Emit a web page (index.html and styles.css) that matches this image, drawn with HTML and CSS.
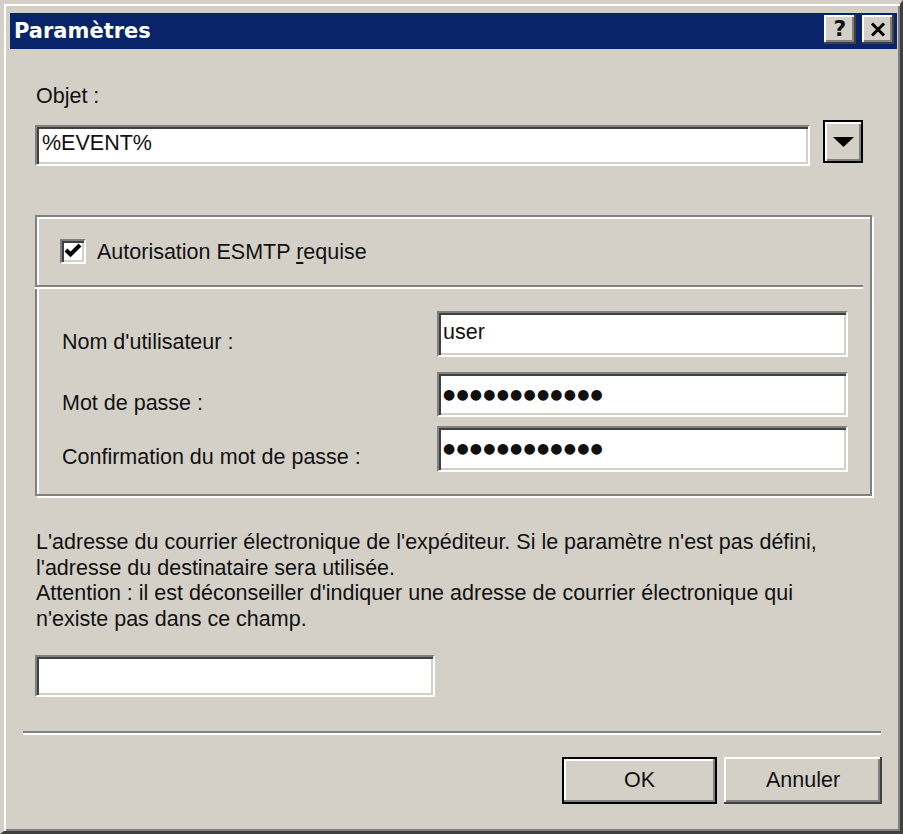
FILE: index.html
```html
<!DOCTYPE html>
<html lang="fr">
<head>
<meta charset="utf-8">
<title>Paramètres</title>
<link rel="stylesheet" href="styles.css">
</head>
<body>
<div class="window">
  <div class="titlebar">
    <span class="title">Paramètres</span>
    <div class="caption-buttons">
      <span class="cap-btn help">?</span>
      <span class="cap-btn close"><svg width="16" height="15" viewBox="0 0 16 15"><path d="M2 1.5 L14 13.5 M14 1.5 L2 13.5" stroke="#000" stroke-width="3" fill="none"/></svg></span>
    </div>
  </div>
  <div class="content">
    <div class="label-objet">Objet :</div>
    <div class="objet-row">
      <div class="field field-objet">%EVENT%</div>
      <div class="combo-btn"><svg width="21" height="10" viewBox="0 0 21 10"><path d="M0 0 H21 L10.5 10 Z" fill="#000"/></svg></div>
    </div>
    <div class="group">
      <div class="group-head">
        <span class="checkbox"><svg width="22" height="21" viewBox="0 0 22 21"><polyline points="4,9 8.5,13.5 18,4" fill="none" stroke="#000" stroke-width="4" stroke-linejoin="miter" stroke-linecap="butt"/></svg></span>
        <span class="check-label">Autorisation ESMTP <u>r</u>equise</span>
      </div>
      <div class="group-sep"></div>
      <div class="form">
        <div class="form-row">
          <span class="form-label">Nom d'utilisateur :</span>
          <div class="field field-form">user</div>
        </div>
        <div class="form-row row-pass">
          <span class="form-label">Mot de passe :</span>
          <div class="field field-form field-short dots">●●●●●●●●●●●●</div>
        </div>
        <div class="form-row row-confirm">
          <span class="form-label">Confirmation du mot de passe :</span>
          <div class="field field-form dots">●●●●●●●●●●●●</div>
        </div>
      </div>
    </div>
    <p class="note">L'adresse du courrier électronique de l'expéditeur. Si le paramètre n'est pas défini, l'adresse du destinataire sera utilisée.<br>Attention : il est déconseiller d'indiquer une adresse de courrier électronique qui n'existe pas dans ce champ.</p>
    <div class="field field-email"></div>
    <div class="separator"></div>
    <div class="buttons">
      <span class="btn btn-default">OK</span>
      <span class="btn">Annuler</span>
    </div>
  </div>
</div>
</body>
</html>
```
FILE: styles.css
```css
* { box-sizing: border-box; }
html, body { margin: 0; padding: 0; }
body { background: #d4d0c8; width: 903px; height: 834px; overflow: hidden; }

.window {
  width: 903px;
  height: 834px;
  background: #d4d0c8;
  border-style: solid;
  border-width: 4px 3px 3px 4px;
  border-color: #d4d0c8 #404040 #404040 #d4d0c8;
  box-shadow: inset 2px 2px 0 #fff, inset -2px -2px 0 #808080;
  padding: 9px 3px 0 6px;
  font-family: "Liberation Sans", Arial, sans-serif;
  font-size: 21.5px;
  color: #111;
  display: flex;
  flex-direction: column;
}

.titlebar {
  height: 36px;
  background: #0a246a;
  display: flex;
  justify-content: space-between;
  align-items: flex-start;
  flex: none;
}
.title {
  font-family: "DejaVu Sans", sans-serif;
  font-weight: bold;
  font-size: 21px;
  color: #fff;
  line-height: 36px;
  padding-left: 4px;
}
.caption-buttons { display: flex; gap: 6px; padding: 2px 3px 0 0; }
.cap-btn {
  width: 32px;
  height: 29px;
  background: #d4d0c8;
  box-shadow: inset -2px -2px 0 #404040, inset 2px 2px 0 #fff, inset -4px -4px 0 #808080;
  display: flex;
  align-items: center;
  justify-content: center;
}
.help {
  font-family: "DejaVu Sans", sans-serif;
  font-weight: bold;
  font-size: 22px;
  line-height: 1;
  padding-bottom: 1px;
}

.content { flex: 1; padding: 0 15px 0 13px; }

.field {
  background: #fff;
  border: 2px solid;
  border-color: #808080 #fff #fff #808080;
  box-shadow: inset 2px 2px 0 #404040, inset -2px -2px 0 #d4d0c8;
  line-height: 26px;
  white-space: nowrap;
}

.label-objet { margin: 34px 0 0 13px; line-height: 26px; }
.objet-row { display: flex; align-items: flex-start; gap: 13px; margin: 11px 0 0 12px; }
.field-objet { width: 775px; height: 41px; margin-top: 5px; padding: 3px 5px 0; }
.combo-btn {
  width: 40px;
  height: 43px;
  border: 2px solid #000;
  background: #d4d0c8;
  box-shadow: inset 2px 2px 0 #fff, inset -2px -2px 0 #808080;
  display: flex;
  align-items: center;
  justify-content: center;
}

.group {
  margin: 49px 10px 0 12px;
  height: 281px;
  border: 2px solid #808080;
  box-shadow: inset 2px 2px 0 #fff, 2px 2px 0 #fff;
}
.group-head { height: 68px; display: flex; align-items: center; padding-left: 23px; }
.checkbox {
  width: 26px;
  height: 25px;
  background: #fff;
  border: 2px solid;
  border-color: #808080 #fff #fff #808080;
  box-shadow: inset 2px 2px 0 #404040, inset -2px -2px 0 #d4d0c8;
  margin-right: 11px;
  display: flex;
}
.check-label { line-height: 26px; padding-top: 2px; }
.check-label u { text-underline-offset: 3px; }
.group-sep {
  height: 4px;
  border-top: 2px solid #808080;
  border-bottom: 2px solid #fff;
  margin: 0 7px 0 -2px;
}
.form { padding: 22px 22px 0 25px; }
.form-row { display: flex; justify-content: space-between; align-items: flex-start; }
.row-pass { margin-top: 15px; }
.row-confirm { margin-top: 9px; }
.form-label { margin-top: 18px; line-height: 26px; }
.field-form { width: 411px; height: 46px; padding: 6px 4px 0; }
.dots {
  font-family: "DejaVu Sans", sans-serif;
  font-size: 14px;
  letter-spacing: 1.2px;
  padding-top: 7px;
}
.field-short { height: 45px; }

.note { margin: 34px 0 0 13px; width: 835px; line-height: 25.67px; }
.field-email { width: 400px; height: 42px; margin: 22px 0 0 12px; }
.separator {
  height: 4px;
  border-top: 2px solid #808080;
  border-bottom: 2px solid #fff;
  margin: 34px 1px 0 0;
}
.buttons { display: flex; justify-content: flex-end; gap: 7px; margin-top: 22px; }
.btn {
  width: 158px;
  height: 47px;
  display: flex;
  align-items: center;
  justify-content: center;
  background: #d4d0c8;
  line-height: 26px;
  box-shadow: inset -2px -2px 0 #404040, inset 2px 2px 0 #fff, inset -4px -4px 0 #808080;
}
.btn-default {
  width: 155px;
  border: 2px solid #000;
  box-shadow: inset -2px -2px 0 #808080, inset 2px 2px 0 #fff;
}
```
